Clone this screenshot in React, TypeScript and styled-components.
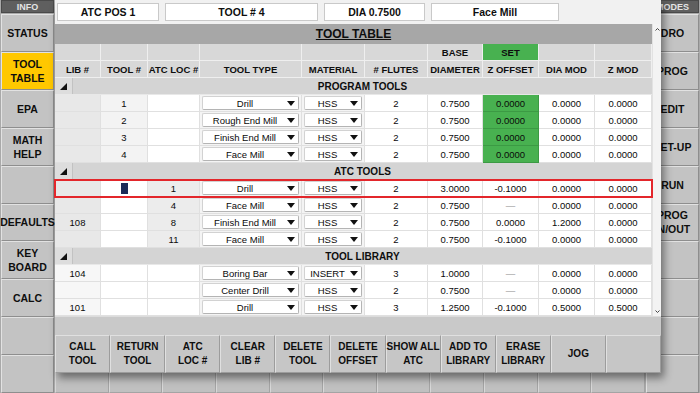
import styled, { createGlobalStyle, css } from "styled-components";

const GlobalStyle = createGlobalStyle`
  html, body {
    margin: 0;
    padding: 0;
  }
  body {
    width: 700px;
    height: 393px;
    overflow: hidden;
    background: #bdbdbd;
    font-family: "Liberation Sans", Arial, sans-serif;
  }
`;

// column widths of the tool table, LIB # .. Z MOD
const COLS = "46px 47px 52px 102px 63px 63px 55px 56px 56px 57px";

interface IToolRow {
  lib?: string;
  tool?: string;
  cursor?: boolean;
  atc?: string;
  type: string;
  material: string;
  flutes: string;
  dia: string;
  zOffset: string;
  diaMod: string;
  zMod: string;
  green?: boolean;
  highlight?: boolean;
}

interface ISection {
  title: string;
  libBg: string;
  toolBg: string;
  atcBg: string;
  rows: IToolRow[];
}

const sections: ISection[] = [
  {
    title: "PROGRAM TOOLS",
    libBg: "#e8e8e8",
    toolBg: "#f3f3f3",
    atcBg: "#ffffff",
    rows: [
      { tool: "1", type: "Drill", material: "HSS", flutes: "2", dia: "0.7500", zOffset: "0.0000", diaMod: "0.0000", zMod: "0.0000", green: true },
      { tool: "2", type: "Rough End Mill", material: "HSS", flutes: "2", dia: "0.7500", zOffset: "0.0000", diaMod: "0.0000", zMod: "0.0000", green: true },
      { tool: "3", type: "Finish End Mill", material: "HSS", flutes: "2", dia: "0.7500", zOffset: "0.0000", diaMod: "0.0000", zMod: "0.0000", green: true },
      { tool: "4", type: "Face Mill", material: "HSS", flutes: "2", dia: "0.7500", zOffset: "0.0000", diaMod: "0.0000", zMod: "0.0000", green: true },
    ],
  },
  {
    title: "ATC TOOLS",
    libBg: "#e8e8e8",
    toolBg: "#ffffff",
    atcBg: "#ececec",
    rows: [
      { cursor: true, atc: "1", type: "Drill", material: "HSS", flutes: "2", dia: "3.0000", zOffset: "-0.1000", diaMod: "0.0000", zMod: "0.0000", highlight: true },
      { atc: "4", type: "Face Mill", material: "HSS", flutes: "2", dia: "0.7500", zOffset: "—", diaMod: "0.0000", zMod: "0.0000" },
      { lib: "108", atc: "8", type: "Finish End Mill", material: "HSS", flutes: "2", dia: "0.7500", zOffset: "0.0000", diaMod: "1.2000", zMod: "0.0000" },
      { atc: "11", type: "Face Mill", material: "HSS", flutes: "2", dia: "0.7500", zOffset: "-0.1000", diaMod: "0.0000", zMod: "0.0000" },
    ],
  },
  {
    title: "TOOL LIBRARY",
    libBg: "#f7f7f7",
    toolBg: "#ffffff",
    atcBg: "#ffffff",
    rows: [
      { lib: "104", type: "Boring Bar", material: "INSERT", flutes: "3", dia: "1.0000", zOffset: "—", diaMod: "0.0000", zMod: "0.0000" },
      { type: "Center Drill", material: "HSS", flutes: "2", dia: "0.7500", zOffset: "—", diaMod: "0.0000", zMod: "0.0000" },
      { lib: "101", type: "Drill", material: "HSS", flutes: "3", dia: "1.2500", zOffset: "-0.1000", diaMod: "0.5000", zMod: "0.5000" },
    ],
  },
];

const leftItems = ["STATUS", "TOOL\nTABLE", "EPA", "MATH\nHELP", "", "DEFAULTS", "KEY\nBOARD", "CALC", "", ""];
const rightItems = ["DRO", "PROG", "EDIT", "SET-UP", "RUN", "PROG\nIN/OUT", "", "", "", ""];
const actions = [
  "CALL\nTOOL",
  "RETURN\nTOOL",
  "ATC\nLOC #",
  "CLEAR\nLIB #",
  "DELETE\nTOOL",
  "DELETE\nOFFSET",
  "SHOW ALL\nATC",
  "ADD TO\nLIBRARY",
  "ERASE\nLIBRARY",
  "JOG",
  "",
];
const headers = ["LIB #", "TOOL #", "ATC LOC #", "TOOL TYPE", "MATERIAL", "# FLUTES", "DIAMETER", "Z OFFSET", "DIA MOD", "Z MOD"];

const DropArrow = () => (
  <svg width="8" height="5" viewBox="0 0 8 5">
    <path d="M0 0H8L4 5Z" fill="#111" />
  </svg>
);

const Select = ({ value }: { value: string }) => (
  <SelectBox>
    <SelectText>{value}</SelectText>
    <DropArrow />
  </SelectBox>
);

function App() {
  return (
    <>
      <GlobalStyle />
      <Screen>
        <Sidebar>
          <SideHeader>INFO</SideHeader>
          {leftItems.map((label, i) => (
            <SideButton key={i} $active={label === "TOOL\nTABLE"}>
              {label}
            </SideButton>
          ))}
        </Sidebar>

        <Workspace>
          <BgButtonRow>
            {Array.from({ length: 11 }).map((_, i) => (
              <BgButton key={i} />
            ))}
          </BgButtonRow>
        </Workspace>

        <Sidebar>
          <SideHeader>MODES</SideHeader>
          {rightItems.map((label, i) => (
            <SideButton key={i}>{label}</SideButton>
          ))}
        </Sidebar>

        <Dialog>
          <InfoBar>
            <InfoField $w={102}>ATC POS 1</InfoField>
            <InfoField $w={153}>TOOL # 4</InfoField>
            <InfoField $w={101}>DIA 0.7500</InfoField>
            <InfoField $w={128}>Face Mill</InfoField>
          </InfoBar>

          <TableArea>
            <TableBody>
              <TitleBar>
                <Title>TOOL TABLE</Title>
              </TitleBar>

              <GridRow>
                {headers.map((h, i) => (
                  <HeadCell key={h} $green={i === 7}>
                    {i === 6 ? "BASE" : i === 7 ? "SET" : ""}
                  </HeadCell>
                ))}
              </GridRow>
              <GridRow>
                {headers.map((h) => (
                  <HeadCell key={h}>{h}</HeadCell>
                ))}
              </GridRow>

              {sections.map((section) => (
                <div key={section.title}>
                  <SectionRow>
                    <Toggle>
                      <svg width="7" height="7" viewBox="0 0 7 7">
                        <path d="M7 0V7H0Z" fill="#111" />
                      </svg>
                    </Toggle>
                    <SectionLabel>{section.title}</SectionLabel>
                  </SectionRow>
                  {section.rows.map((row, i) => (
                    <GridRow key={i} $highlight={row.highlight}>
                      <Cell $bg={section.libBg}>{row.lib}</Cell>
                      <Cell $bg={section.toolBg}>
                        {row.cursor ? <Cursor /> : row.tool}
                      </Cell>
                      <Cell $bg={section.atcBg}>{row.atc}</Cell>
                      <SelectCell>
                        <Select value={row.type} />
                      </SelectCell>
                      <SelectCell>
                        <Select value={row.material} />
                      </SelectCell>
                      <Cell>{row.flutes}</Cell>
                      <Cell>{row.dia}</Cell>
                      <Cell $green={row.green} $dim={row.zOffset === "—"}>
                        {row.zOffset}
                      </Cell>
                      <Cell>{row.diaMod}</Cell>
                      <Cell>{row.zMod}</Cell>
                    </GridRow>
                  ))}
                </div>
              ))}
            </TableBody>
            <ScrollTrack>
              <svg width="5" height="3" viewBox="0 0 5 3">
                <path d="M0.5 2.5L2.5 0.5L4.5 2.5" stroke="#444" fill="none" />
              </svg>
              <svg width="5" height="3" viewBox="0 0 5 3">
                <path d="M0.5 0.5L2.5 2.5L4.5 0.5" stroke="#444" fill="none" />
              </svg>
            </ScrollTrack>
          </TableArea>

          <Gap />

          <ActionRow>
            {actions.map((label, i) => (
              <ActionButton key={i}>{label}</ActionButton>
            ))}
          </ActionRow>
        </Dialog>
      </Screen>
    </>
  );
}

const Screen = styled.div`
  position: relative;
  display: flex;
  width: 700px;
  height: 393px;
  background: #bdbdbd;
`;

const Sidebar = styled.div`
  width: 55px;
  display: flex;
  flex-direction: column;
  background: #a9a9a9;
`;

const SideHeader = styled.div`
  height: 13px;
  margin: 0 1px 1px;
  display: flex;
  align-items: center;
  justify-content: center;
  background: #5f5f5f;
  border: 1px solid #4a4a4a;
  box-sizing: border-box;
  color: #e4e4e4;
  font-size: 9px;
  font-weight: bold;
`;

const SideButton = styled.div<{ $active?: boolean }>`
  flex: 1;
  margin: 0 1px;
  display: flex;
  align-items: center;
  justify-content: center;
  text-align: center;
  white-space: pre-line;
  background: ${(props) => (props.$active ? "#ffc800" : "#c3c3c3")};
  border: 1px solid;
  border-color: #e2e2e2 #8e8e8e #8e8e8e #e2e2e2;
  color: #0e0e0e;
  font-size: 10.5px;
  font-weight: bold;
  line-height: 14px;
`;

const Workspace = styled.div`
  flex: 1;
  display: flex;
  flex-direction: column;
  justify-content: flex-end;
`;

const BgButtonRow = styled.div`
  height: 38px;
  display: grid;
  grid-template-columns: repeat(11, 1fr);
`;

const BgButton = styled.div`
  background: #c0c0c0;
  border: 1px solid;
  border-color: #d8d8d8 #a4a4a4 #a4a4a4 #d8d8d8;
`;

const Dialog = styled.div`
  position: absolute;
  left: 55px;
  top: 0;
  width: 606px;
  height: 373px;
  display: flex;
  flex-direction: column;
  background: #c8c8c8;
  box-shadow: 3px 5px 8px rgba(0, 0, 0, 0.45);
`;

const InfoBar = styled.div`
  height: 24px;
  box-sizing: border-box;
  padding: 3px 0 3px 2px;
  display: flex;
  gap: 6px;
  background: #f1f1f1;
`;

const InfoField = styled.div<{ $w: number }>`
  width: ${(props) => props.$w}px;
  box-sizing: border-box;
  display: flex;
  align-items: center;
  justify-content: center;
  background: #ffffff;
  border: 1px solid #c9c9c9;
  color: #0e0e0e;
  font-size: 10.5px;
  font-weight: bold;
`;

const TableArea = styled.div`
  height: 292px;
  display: flex;
`;

const TableBody = styled.div`
  width: 597px;
  display: flex;
  flex-direction: column;
  background: #ffffff;
`;

const TitleBar = styled.div`
  height: 20px;
  display: flex;
  align-items: center;
  justify-content: center;
  background: #a7a7a7;
`;

const Title = styled.span`
  color: #0e0e0e;
  font-size: 12px;
  font-weight: bold;
  text-decoration: underline;
`;

const GridRow = styled.div<{ $highlight?: boolean }>`
  position: relative;
  display: grid;
  grid-template-columns: ${COLS};
  height: 17px;
  ${(props) =>
    props.$highlight &&
    css`
      outline: 2px solid #e3262b;
      outline-offset: -1px;
      z-index: 1;
    `}
`;

const HeadCell = styled.div<{ $green?: boolean }>`
  display: flex;
  align-items: center;
  justify-content: center;
  background: ${(props) => (props.$green ? "#48b150" : "#d8d8d8")};
  border-right: 1px solid #efefef;
  border-bottom: 1px solid #efefef;
  color: #0e0e0e;
  font-size: 9.5px;
  font-weight: bold;
  white-space: nowrap;
  overflow: hidden;
`;

const SectionRow = styled.div`
  display: grid;
  grid-template-columns: 18px 1fr;
  height: 17px;
  background: #d4d4d4;
  border-bottom: 1px solid #e8e8e8;
  box-sizing: border-box;
`;

const Toggle = styled.div`
  display: flex;
  align-items: center;
  justify-content: center;
  background: #dddddd;
  border-right: 1px solid #c2c2c2;
`;

const SectionLabel = styled.div`
  display: flex;
  align-items: center;
  justify-content: center;
  color: #0e0e0e;
  font-size: 10px;
  font-weight: bold;
`;

const Cell = styled.div<{ $bg?: string; $green?: boolean; $dim?: boolean }>`
  display: flex;
  align-items: center;
  justify-content: center;
  background: ${(props) => (props.$green ? "#48b150" : props.$bg ?? "#ffffff")};
  border-right: 1px solid ${(props) => (props.$green ? "#3c9a44" : "#e0e0e0")};
  border-bottom: 1px solid ${(props) => (props.$green ? "#3c9a44" : "#e0e0e0")};
  color: ${(props) => (props.$dim ? "#8a8a8a" : "#0a0a0a")};
  font-size: 9.5px;
  white-space: nowrap;
  overflow: hidden;
`;

const SelectCell = styled.div`
  display: flex;
  padding: 1px 2px;
  background: #f4f4f4;
  border-right: 1px solid #e0e0e0;
  border-bottom: 1px solid #e0e0e0;
`;

const SelectBox = styled.div`
  flex: 1;
  display: flex;
  align-items: center;
  padding-right: 3px;
  background: #ffffff;
  border: 1px solid;
  border-color: #d2d2d2 #b4b4b4 #b4b4b4 #d2d2d2;
  border-radius: 2px;
`;

const SelectText = styled.span`
  flex: 1;
  text-align: center;
  color: #0a0a0a;
  font-size: 9.5px;
  white-space: nowrap;
`;

const Cursor = styled.span`
  width: 7px;
  height: 11px;
  background: #1b2b58;
`;

const ScrollTrack = styled.div`
  width: 9px;
  display: flex;
  flex-direction: column;
  align-items: center;
  justify-content: space-between;
  padding: 4px 0 3px;
  box-sizing: border-box;
  background: #f3f3f3;
  border-left: 1px solid #e2e2e2;
`;

const Gap = styled.div`
  flex: 1;
  background: #c9c9c9;
  border-top: 1px solid #dcdcdc;
`;

const ActionRow = styled.div`
  height: 38px;
  display: grid;
  grid-template-columns: repeat(11, 1fr);
`;

const ActionButton = styled.div`
  display: flex;
  align-items: center;
  justify-content: center;
  text-align: center;
  white-space: pre-line;
  background: #c6c6c6;
  border: 1px solid;
  border-color: #e0e0e0 #9c9c9c #9c9c9c #e0e0e0;
  color: #0e0e0e;
  font-size: 10px;
  font-weight: bold;
  line-height: 14px;
`;

export default App;
